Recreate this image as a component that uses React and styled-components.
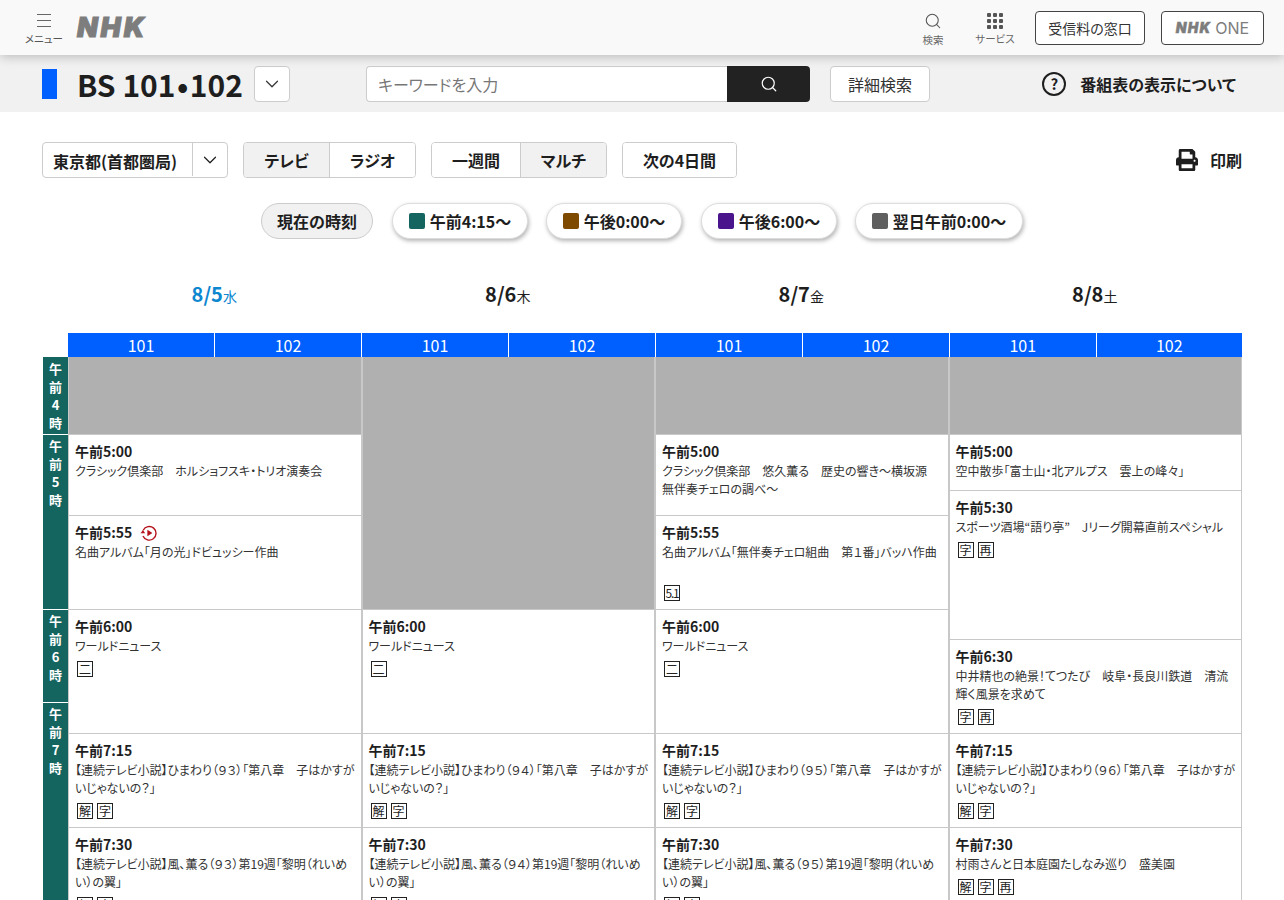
import React from "react";
import styled, { createGlobalStyle } from "styled-components";
import { Search, ChevronDown } from "lucide-react";
import { FaPrint } from "react-icons/fa";

const GlobalStyle = createGlobalStyle`
  html, body { margin: 0; padding: 0; background: #fff; overflow: hidden; }
  body {
    font-family: "Noto Sans CJK JP", "Noto Sans", sans-serif;
    font-feature-settings: "palt";
    color: #1e1e1e;
  }
  * { box-sizing: border-box; }
`;

const Page = styled.div`
  width: 1284px;
  height: 900px;
  overflow: hidden;
`;

const TopBar = styled.header`
  position: relative;
  z-index: 2;
  height: 55px;
  background: #f9f9f9;
  box-shadow: 0 2px 10px rgba(0, 0, 0, 0.22);
  display: flex;
  align-items: center;
  padding: 0 20px 0 25px;
`;

const MenuButton = styled.div`
  width: 38px;
  display: flex;
  flex-direction: column;
  align-items: center;
  color: #555;
  font-size: 10.5px;
  line-height: 12px;
  white-space: nowrap;
  margin-top: 3px;
  svg { margin-bottom: 5px; }
`;

const Logo = styled.span`
  font-family: "Inter", "Liberation Sans", sans-serif;
  font-weight: 900;
  font-style: italic;
  font-size: 27px;
  line-height: 30px;
  letter-spacing: 2.8px;
  color: #7d7d7d;
  -webkit-text-stroke: 1px #7d7d7d;
  margin-left: 14px;
  margin-top: 1px;
`;

const Spacer = styled.div`
  flex: 1;
`;

const TopLink = styled.div`
  width: ${(p) => p.$w}px;
  margin-right: ${(p) => p.$mr}px;
  display: flex;
  flex-direction: column;
  align-items: center;
  color: #666;
  font-size: 10.5px;
  line-height: 12px;
  margin-top: 2px;
  svg { margin-bottom: 4px; }
`;

const TopButton = styled.div`
  width: ${(p) => p.$w}px;
  height: 34px;
  margin-left: ${(p) => p.$ml}px;
  border: 1px solid #444;
  border-radius: 4px;
  background: #fff;
  display: flex;
  align-items: center;
  justify-content: center;
  font-size: 14px;
  color: #333;
`;

const OneLogo = styled.span`
  font-family: "Inter", "Liberation Sans", sans-serif;
  font-weight: 900;
  font-style: italic;
  font-size: 14px;
  letter-spacing: 1.2px;
  color: #7d7d7d;
  -webkit-text-stroke: 0.4px #7d7d7d;
  margin-right: 4px;
`;

const OneText = styled.span`
  font-family: "Inter", "Liberation Sans", sans-serif;
  font-size: 16px;
  color: #7d7d7d;
`;

const SubBar = styled.div`
  height: 57px;
  background: #f1f1f1;
  display: flex;
  align-items: center;
  padding: 0 48px 0 42px;
`;

const ChannelMark = styled.span`
  width: 15px;
  height: 30px;
  background: #0060ff;
  margin-right: 20px;
`;

const ChannelTitle = styled.h1`
  margin: 0;
  font-size: 30px;
  line-height: 40px;
  font-weight: 700;
  color: #1e1e1e;
  width: 177px;
  white-space: nowrap;
`;

const TitleDot = styled.span`
  margin: 0 1.5px;
`;

const SquareSelect = styled.div`
  width: 36px;
  height: 36px;
  background: #fff;
  border: 1px solid #ccc;
  border-radius: 4px;
  display: flex;
  align-items: center;
  justify-content: center;
  color: #333;
`;

const SearchBox = styled.div`
  display: flex;
  width: 444px;
  height: 36px;
  margin-left: 76px;
`;

const SearchInput = styled.div`
  flex: 1;
  background: #fff;
  border: 1px solid #ccc;
  border-right: none;
  border-radius: 4px 0 0 4px;
  font-size: 16px;
  line-height: 34px;
  padding-left: 11px;
  color: #777;
`;

const SearchButton = styled.div`
  width: 83px;
  background: #222;
  border-radius: 0 4px 4px 0;
  color: #fff;
  display: flex;
  align-items: center;
  justify-content: center;
`;

const PlainButton = styled.div`
  width: ${(p) => p.$w}px;
  height: 36px;
  margin-left: ${(p) => p.$ml || 0}px;
  background: #fff;
  border: 1px solid #ccc;
  border-radius: 4px;
  display: flex;
  align-items: center;
  justify-content: center;
  font-size: 16px;
  font-weight: ${(p) => (p.$bold ? 700 : 400)};
  color: #333;
`;

const HelpLink = styled.div`
  display: flex;
  align-items: center;
  gap: 14px;
  margin-left: auto;
  font-size: 16px;
  font-weight: 700;
`;

const HelpIcon = styled.span`
  width: 24px;
  height: 24px;
  border: 2px solid #1e1e1e;
  border-radius: 50%;
  display: flex;
  align-items: center;
  justify-content: center;
  font-size: 15px;
  line-height: 1;
  font-weight: 700;
`;

const Controls = styled.div`
  display: flex;
  align-items: center;
  height: 36px;
  margin: 30px 42px 0;
`;

const AreaSelect = styled.div`
  display: flex;
  width: 186px;
  height: 36px;
  border: 1px solid #ccc;
  border-radius: 4px;
  font-size: 16px;
  font-weight: 700;
`;

const AreaName = styled.div`
  flex: 1;
  padding-left: 10px;
  line-height: 36px;
  border-right: 1px solid #ccc;
  margin: 0 0 1px;
`;

const AreaArrow = styled.div`
  width: 34px;
  display: flex;
  align-items: center;
  justify-content: center;
`;

const Segment = styled.div`
  display: flex;
  height: 36px;
  margin-left: 15px;
  border: 1px solid #ccc;
  border-radius: 4px;
  overflow: hidden;
`;

const SegmentItem = styled.div`
  width: ${(p) => p.$w}px;
  display: flex;
  align-items: center;
  justify-content: center;
  font-size: 16px;
  font-weight: 700;
  background: ${(p) => (p.$active ? "#f1f1f1" : "#fff")};
  & + & { border-left: 1px solid #ccc; }
`;

const PrintLink = styled.div`
  display: flex;
  align-items: center;
  gap: 12px;
  margin-left: auto;
  font-size: 16px;
  font-weight: 700;
`;

const Pills = styled.div`
  display: flex;
  justify-content: center;
  margin-top: 25px;
`;

const Pill = styled.div`
  width: ${(p) => p.$w}px;
  height: 36px;
  margin-left: ${(p) => p.$ml || 0}px;
  border-radius: 18px;
  display: flex;
  align-items: center;
  justify-content: center;
  gap: 5px;
  font-size: 16px;
  font-weight: 700;
  background: ${(p) => (p.$now ? "#f1f1f1" : "#fff")};
  border: 1px solid ${(p) => (p.$now ? "#ccc" : "#ddd")};
  box-shadow: ${(p) => (p.$now ? "none" : "1px 2px 4px rgba(0, 0, 0, 0.3)")};
`;

const Swatch = styled.span`
  width: 16px;
  height: 16px;
  border-radius: 2px;
  background: ${(p) => p.$color};
`;

const DayHeads = styled.div`
  display: grid;
  grid-template-columns: repeat(4, 1fr);
  margin: 39px 42px 0 68px;
  height: 55px;
`;

const DayHead = styled.div`
  text-align: center;
  font-size: 20px;
  line-height: 32px;
  font-weight: 700;
  padding-right: 1px;
  color: ${(p) => (p.$today ? "#0d87d0" : "#1e1e1e")};
  small {
    font-size: 14px;
    font-weight: 400;
  }
`;

const ChannelRow = styled.div`
  display: grid;
  grid-template-columns: 294px 294px 294px 292px;
  margin: 0 42px 0 68px;
`;

const ChannelPair = styled.div`
  display: grid;
  grid-template-columns: 1fr 1fr;
  gap: 1px;
  height: 24px;
  background: #fff;
  padding-right: 1px;
  &:last-child { padding-right: 0; }
`;

const ChannelCell = styled.div`
  background: #0060ff;
  color: #fff;
  font-size: 16px;
  line-height: 25px;
  text-align: center;
`;

const Schedule = styled.div`
  display: flex;
  margin: 0 42px;
`;

const HourColumn = styled.div`
  width: 26px;
  flex: none;
`;

const Hour = styled.div`
  height: ${(p) => p.$h}px;
  margin-bottom: 1px;
  width: 25px;
  margin-left: 1px;
  background: #146560;
  color: #fff;
  font-size: 13px;
  font-weight: 700;
  line-height: 18px;
  text-align: center;
  padding-top: ${(p) => p.$pt}px;
`;

const Days = styled.div`
  flex: 1;
  display: grid;
  grid-template-columns: repeat(4, 1fr);
`;

const Day = styled.div`
  min-width: 0;
  border-left: 1px solid #c8c8c8;
  border-right: 1px solid #c8c8c8;
`;

const Blank = styled.div`
  height: ${(p) => p.$h}px;
  background: #b0b0b0;
  border-bottom: 1px solid #c8c8c8;
`;

const Program = styled.div`
  height: ${(p) => p.$h}px;
  padding: 6px 5px 0 6px;
  border-bottom: 1px solid #c8c8c8;
  overflow: hidden;
`;

const Time = styled.div`
  display: flex;
  align-items: center;
  gap: 8px;
  font-size: 14px;
  line-height: 21px;
  font-weight: 700;
`;

const Title = styled.div`
  font-size: 12px;
  line-height: 18px;
  color: #333;
`;

const Badges = styled.div`
  display: flex;
  gap: 4px;
  margin: ${(p) => p.$mt}px 0 0 2px;
`;

const Badge = styled.span`
  width: 16px;
  height: 16px;
  border: 1px solid #222;
  font-size: 12px;
  line-height: 14px;
  letter-spacing: ${(p) => (p.$small ? "-1.2px" : "0")};
  text-align: center;
  color: #222;
`;

const MenuLines = () => (
  <svg width="16" height="15" viewBox="0 0 16 15" fill="none" stroke="#666" strokeWidth="1.2">
    <path d="M1 1.5h14M1 7.5h14M1 13.5h14" />
  </svg>
);

const GridDots = () => (
  <svg width="16" height="16" viewBox="0 0 16 16" fill="#555">
    {[0, 6, 12].map((y) =>
      [0, 6, 12].map((x) => <rect key={`${x}-${y}`} x={x} y={y} width="4" height="4" rx="1" />)
    )}
  </svg>
);

const ReplayIcon = () => (
  <svg width="18" height="18" viewBox="0 0 18 18" fill="none">
    <path d="M3.2 6.2A6.8 6.8 0 1 1 3 12" stroke="#b5121b" strokeWidth="1.4" />
    <path d="M0.6 9.2h4.6L2.9 6z" fill="#b5121b" />
    <path d="M7.4 5.8v6.4l5-3.2z" fill="#b5121b" />
  </svg>
);

const hours = [
  { h: 77, pt: 3, label: "4" },
  { h: 174, pt: 2, label: "5" },
  { h: 92, pt: 2, label: "6" },
  { h: 300, pt: 2, label: "7" },
];

const dates = [
  { d: "8/5", w: "水", today: true },
  { d: "8/6", w: "木" },
  { d: "8/7", w: "金" },
  { d: "8/8", w: "土" },
];

const asadora = (n) => `【連続テレビ小説】ひまわり（${n}）「第八章　子はかすがいじゃないの？」`;
const kaoru = (n) => `【連続テレビ小説】風、薫る（${n}）第19週「黎明（れいめい）の翼」`;

const schedule = [
  [
    { blank: 78 },
    { h: 81, time: "午前5:00", title: "クラシック倶楽部　ホルショフスキ・トリオ演奏会" },
    { h: 94, time: "午前5:55", replay: true, title: "名曲アルバム「月の光」ドビュッシー作曲" },
    { h: 124, time: "午前6:00", title: "ワールドニュース", badges: ["二"] },
    { h: 94, time: "午前7:15", title: asadora("９３"), badges: ["解", "字"] },
    { h: 120, time: "午前7:30", title: kaoru("９３"), badges: ["解", "字"] },
  ],
  [
    { blank: 253 },
    { h: 124, time: "午前6:00", title: "ワールドニュース", badges: ["二"] },
    { h: 94, time: "午前7:15", title: asadora("９４"), badges: ["解", "字"] },
    { h: 120, time: "午前7:30", title: kaoru("９４"), badges: ["解", "字"] },
  ],
  [
    { blank: 78 },
    { h: 81, time: "午前5:00", title: "クラシック倶楽部　悠久薫る　歴史の響き〜横坂源　無伴奏チェロの調べ〜" },
    { h: 94, time: "午前5:55", title: "名曲アルバム「無伴奏チェロ組曲　第１番」バッハ作曲", badges: ["5.1"], badgeGap: 24 },
    { h: 124, time: "午前6:00", title: "ワールドニュース", badges: ["二"] },
    { h: 94, time: "午前7:15", title: asadora("９５"), badges: ["解", "字"] },
    { h: 120, time: "午前7:30", title: kaoru("９５"), badges: ["解", "字"] },
  ],
  [
    { blank: 78 },
    { h: 56, time: "午前5:00", title: "空中散歩「富士山・北アルプス　雲上の峰々」" },
    { h: 149, time: "午前5:30", title: "スポーツ酒場“語り亭”　Jリーグ開幕直前スペシャル", badges: ["字", "再"] },
    { h: 94, time: "午前6:30", title: "中井精也の絶景！てつたび　岐阜・長良川鉄道　清流輝く風景を求めて", badges: ["字", "再"] },
    { h: 94, time: "午前7:15", title: asadora("９６"), badges: ["解", "字"] },
    { h: 120, time: "午前7:30", title: "村雨さんと日本庭園たしなみ巡り　盛美園", badges: ["解", "字", "再"] },
  ],
];

export default function App() {
  return (
    <Page>
      <GlobalStyle />
      <TopBar>
        <MenuButton>
          <MenuLines />
          メニュー
        </MenuButton>
        <Logo>NHK</Logo>
        <Spacer />
        <TopLink $w={30} $mr={22}>
          <Search size={18} strokeWidth={1.4} color="#555" />
          検索
        </TopLink>
        <TopLink $w={50} $mr={0}>
          <GridDots />
          サービス
        </TopLink>
        <TopButton $w={110} $ml={15}>受信料の窓口</TopButton>
        <TopButton $w={103} $ml={16}>
          <OneLogo>NHK</OneLogo>
          <OneText>ONE</OneText>
        </TopButton>
      </TopBar>

      <SubBar>
        <ChannelMark />
        <ChannelTitle>BS 101<TitleDot>•</TitleDot>102</ChannelTitle>
        <SquareSelect>
          <ChevronDown size={22} strokeWidth={1.3} />
        </SquareSelect>
        <SearchBox>
          <SearchInput>キーワードを入力</SearchInput>
          <SearchButton>
            <Search size={18} strokeWidth={1.6} />
          </SearchButton>
        </SearchBox>
        <PlainButton $w={100} $ml={20}>詳細検索</PlainButton>
        <HelpLink>
          <HelpIcon>?</HelpIcon>
          番組表の表示について
        </HelpLink>
      </SubBar>

      <Controls>
        <AreaSelect>
          <AreaName>東京都(首都圏局)</AreaName>
          <AreaArrow>
            <ChevronDown size={22} strokeWidth={1.3} />
          </AreaArrow>
        </AreaSelect>
        <Segment>
          <SegmentItem $w={85} $active>テレビ</SegmentItem>
          <SegmentItem $w={86}>ラジオ</SegmentItem>
        </Segment>
        <Segment>
          <SegmentItem $w={88}>一週間</SegmentItem>
          <SegmentItem $w={86} $active>マルチ</SegmentItem>
        </Segment>
        <Segment>
          <SegmentItem $w={113}>次の4日間</SegmentItem>
        </Segment>
        <PrintLink>
          <FaPrint size={22} />
          印刷
        </PrintLink>
      </Controls>

      <Pills>
        <Pill $w={112} $now>現在の時刻</Pill>
        <Pill $w={136} $ml={19}><Swatch $color="#146560" />午前4:15〜</Pill>
        <Pill $w={136} $ml={18}><Swatch $color="#7d4a00" />午後0:00〜</Pill>
        <Pill $w={136} $ml={19}><Swatch $color="#4a148c" />午後6:00〜</Pill>
        <Pill $w={168} $ml={18}><Swatch $color="#5f5f5f" />翌日午前0:00〜</Pill>
      </Pills>

      <DayHeads>
        {dates.map((item) => (
          <DayHead key={item.d} $today={item.today}>
            {item.d}
            <small>{item.w}</small>
          </DayHead>
        ))}
      </DayHeads>

      <ChannelRow>
        {dates.map((item) => (
          <ChannelPair key={item.d}>
            <ChannelCell>101</ChannelCell>
            <ChannelCell>102</ChannelCell>
          </ChannelPair>
        ))}
      </ChannelRow>

      <Schedule>
        <HourColumn>
          {hours.map((hour) => (
            <Hour key={hour.label} $h={hour.h} $pt={hour.pt}>
              午<br />前<br />{hour.label}<br />時
            </Hour>
          ))}
        </HourColumn>
        <Days>
          {schedule.map((day, i) => (
            <Day key={i}>
              {day.map((item, j) =>
                item.blank ? (
                  <Blank key={j} $h={item.blank} />
                ) : (
                  <Program key={j} $h={item.h}>
                    <Time>
                      {item.time}
                      {item.replay && <ReplayIcon />}
                    </Time>
                    <Title>{item.title}</Title>
                    {item.badges && (
                      <Badges $mt={item.badgeGap || 6}>
                        {item.badges.map((b) => (
                          <Badge key={b} $small={b === "5.1"}>{b}</Badge>
                        ))}
                      </Badges>
                    )}
                  </Program>
                )
              )}
            </Day>
          ))}
        </Days>
      </Schedule>
    </Page>
  );
}
